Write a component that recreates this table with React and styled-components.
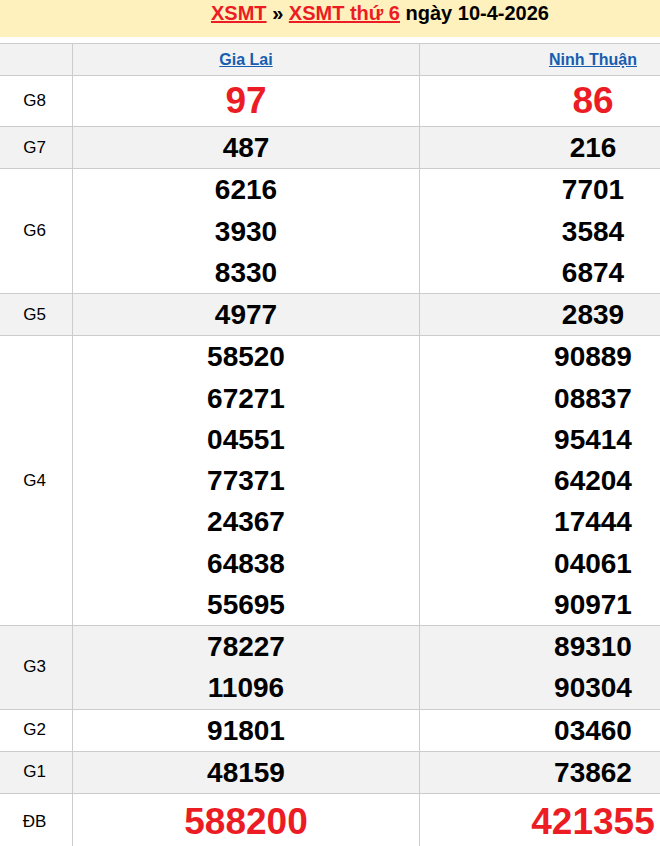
import React from "react";
import styled, { createGlobalStyle } from "styled-components";

const GlobalStyle = createGlobalStyle`
    html, body {
        margin: 0;
        padding: 0;
        overflow: hidden;
        background: #fff;
        font-family: "Liberation Sans", Arial, sans-serif;
    }
`;

// lineH: chiều cao mỗi dòng số trong ô
const prizes = [
    { name: "G8", a: ["97"], b: ["86"], big: true, lineH: 50 },
    { name: "G7", a: ["487"], b: ["216"] },
    { name: "G6", a: ["6216", "3930", "8330"], b: ["7701", "3584", "6874"] },
    { name: "G5", a: ["4977"], b: ["2839"] },
    {
        name: "G4",
        a: ["58520", "67271", "04551", "77371", "24367", "64838", "55695"],
        b: ["90889", "08837", "95414", "64204", "17444", "04061", "90971"],
    },
    { name: "G3", a: ["78227", "11096"], b: ["89310", "90304"] },
    { name: "G2", a: ["91801"], b: ["03460"] },
    { name: "G1", a: ["48159"], b: ["73862"] },
    { name: "ĐB", a: ["588200"], b: ["421355"], big: true, lineH: 56 },
];

const NumberList = ({ list, big, lineH }) => (
    <Numbers>
        {list.map((n) => (
            <Num key={n} $big={big} $lineH={lineH}>
                {n}
            </Num>
        ))}
    </Numbers>
);

const App = () => {
    return (
        <Page>
            <GlobalStyle />
            <Title>
                <RedLink href="#">XSMT</RedLink> » <RedLink href="#">XSMT thứ 6</RedLink> ngày 10-4-2026
            </Title>
            <Grid>
                <Cell $gray />
                <Cell $gray>
                    <Province href="#">Gia Lai</Province>
                </Cell>
                <Cell $gray>
                    <Province href="#">Ninh Thuận</Province>
                </Cell>
                {prizes.map((p, i) => {
                    const gray = i % 2 === 1;
                    return (
                        <React.Fragment key={p.name}>
                            <Label $gray={gray}>{p.name}</Label>
                            <Cell $gray={gray}>
                                <NumberList list={p.a} big={p.big} lineH={p.lineH} />
                            </Cell>
                            <Cell $gray={gray}>
                                <NumberList list={p.b} big={p.big} lineH={p.lineH} />
                            </Cell>
                        </React.Fragment>
                    );
                })}
            </Grid>
        </Page>
    );
};

export default App;

const Page = styled.div`
    width: 767px;
`;

const Title = styled.h2`
    margin: 0 0 6px;
    padding: 2px 7px 0 0;
    height: 37px;
    box-sizing: border-box;
    background: #fff1bd;
    text-align: center;
    font-size: 20px;
    line-height: 23px;
    font-weight: 700;
    color: #000;
`;

const RedLink = styled.a`
    color: #ec1c24;
    text-decoration: underline;
`;

const Grid = styled.div`
    display: grid;
    grid-template-columns: 72px 346px 346px;
    gap: 1px;
    padding: 1px;
    margin-left: -1px;
    background: #cccccc;
    width: max-content;
`;

const Cell = styled.div`
    background: ${(p) => (p.$gray ? "#f2f2f2" : "#ffffff")};
    display: flex;
    align-items: center;
    justify-content: center;
    min-height: 31px;
`;

const Label = styled(Cell)`
    padding-right: 3px;
    font-size: 17px;
    color: #000;
`;

const Province = styled.a`
    font-size: 16px;
    font-weight: 700;
    line-height: 31px;
    color: #175db0;
    text-decoration: underline;
`;

const Numbers = styled.div`
    display: flex;
    flex-direction: column;
    align-items: center;
`;

const Num = styled.div`
    font-weight: 700;
    font-size: ${(p) => (p.$big ? "37px" : "28px")};
    line-height: ${(p) => (p.$lineH ? `${p.$lineH}px` : "41.25px")};
    color: ${(p) => (p.$big ? "#ec1c24" : "#000")};
`;
